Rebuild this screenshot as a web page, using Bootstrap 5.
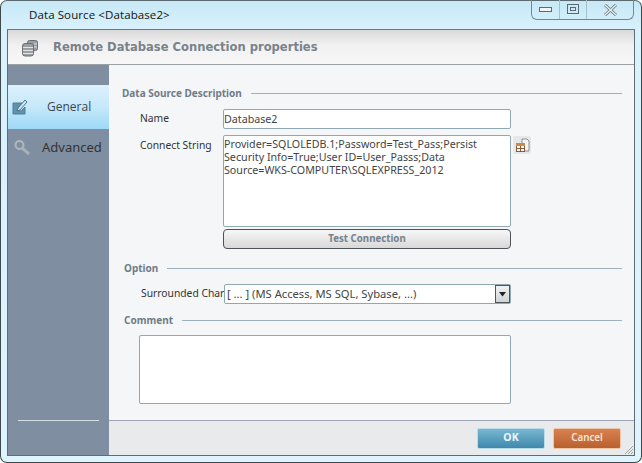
<!DOCTYPE html>
<html lang="en">
<head>
<meta charset="utf-8">
<title>Data Source</title>
<link href="https://cdn.jsdelivr.net/npm/bootstrap@5.3.0/dist/css/bootstrap.min.css" rel="stylesheet">
<style>
html,body{margin:0;height:463px;overflow:hidden;background:#fff}
body{font-family:"Noto Sans",sans-serif;font-size:11px;color:#333}
.dlg{width:642px;height:463px;border:1px solid #3c4a50;border-top-color:#5a6a70;border-radius:7px;background:linear-gradient(180deg,#c7e8f6 0,#d8f1fc 28px,#dff4fd 100%)}
.cap{height:28px;padding-left:28px;font-size:11.5px;color:#111;font-family:"Open Sans",sans-serif;position:relative;letter-spacing:.1px}
.ctl{position:absolute;top:-1px;right:7px;width:103px;height:20px;border:1px solid #6f8a96;border-top:0;border-radius:0 0 6px 6px}
.ctl>div{height:19px;border-right:1px solid #a5bfcb}
.ctl>div:last-child{border-right:0}
.inner{margin:0 6px 6px;border:1px solid #5e6c74;background:#f5f6f7;border-top-color:#6a7880;min-height:0}
.hdr{height:35px;padding-left:14px;padding-top:2px;background:linear-gradient(180deg,#d9d9d9 0,#f1f1f1 45%,#f7f7f7 100%);border-bottom:1px solid #9aa0a4;gap:15px}
.hdr h1{font-family:"DejaVu Sans",sans-serif;font-size:11.55px;font-weight:700;color:#78828a;margin:0}
.side{width:101px;background:#7f8fa1;padding-top:20px;position:relative}
.tab{height:44px;padding-left:4px}
.tab span{color:#e4e8ee;font-family:"Open Sans",sans-serif;font-size:12px}
.tab-on{background:linear-gradient(180deg,#dcf1fc 0,#c6e8fa 50%,#9ed8f6 100%)}
.tab-on span{color:#3a4650;margin-left:19px}
.tab-off{height:37px;padding-left:6px}
.tab-off span{margin-left:12px;font-size:13px}
.rule-s{position:absolute;left:10px;width:81px;top:355px;border-top:1px solid #d6dde4}
.pane{padding:21px 12px 0 13px}
.leg{gap:9px;height:14px;color:#6f7c88;font-weight:700;font-size:10px;font-family:"Noto Sans",sans-serif}
.leg i{flex:1;border-top:1px solid #9db0bd}
.lbl{width:101px;padding-left:18px;color:#333;font-size:10.3px}
.form-control.fld{border:1px solid #8fa8b4;border-radius:2px;font-size:10.7px;padding:0;color:#444;background-color:#fff;line-height:13px;box-shadow:none;min-height:0;font-family:"Noto Sans",sans-serif;resize:none}
.nm{height:20px;width:288px}
.cs{height:92px;width:288px;padding-top:2px!important}
.tst{width:288px;height:20px;margin-top:2px;margin-left:101px;border:1px solid #4d5258;border-radius:4px;padding:0;background:linear-gradient(180deg,#f7f7f7,#d8d8d8);font-size:9.7px;font-weight:700;color:#75818c;font-family:"Noto Sans",sans-serif}
.pick{width:18px;height:18px;background:#e6e7e8;border-radius:2px;margin-left:2px;margin-top:1px}
.sel{width:287px;height:20px;background:#fff;border:1px solid #8fa8b4;border-radius:2px;padding-left:2px;position:relative;color:#444;font-size:11.2px}
.arr{position:absolute;right:0;top:0;width:15px;height:18px;border:1px solid #4f555a;background:linear-gradient(180deg,#f2f2f2,#cfd3d6)}
.cmt{width:372px;height:69px;margin-left:17px;margin-top:8px}
.foot{height:35px;background:#e9eaec;border-top:1px solid #9da3b4;padding-right:13px;gap:8px;position:relative}
.act{width:68px;height:21px;border:0;border-radius:2px;padding:0;font-size:10.5px;font-family:"Noto Sans",sans-serif;color:#eef6fa}
.ok{background:linear-gradient(180deg,#78b7d2,#3f88ad);font-weight:700;border:1px solid #b8dbe8}
.cnl{background:linear-gradient(180deg,#d9824f,#b8602e);border:1px solid #eec6ab;font-weight:600;font-size:9.8px;color:#f6e6da}
.grip{position:absolute;right:0;bottom:0}
</style>
</head>
<body>
<div class="dlg d-flex flex-column">
  <div class="cap d-flex align-items-center">Data Source &lt;Database2&gt;
    <div class="ctl d-flex">
      <div class="d-flex align-items-center justify-content-center" style="width:28px"><svg width="13" height="6"><rect x=".5" y=".5" width="12" height="4" fill="#f2f4f5" stroke="#5b6a72"/></svg></div>
      <div class="d-flex align-items-center justify-content-center" style="width:27px"><svg width="12" height="11"><rect x=".5" y=".5" width="11" height="9" fill="none" stroke="#5b6a72"/><rect x="3.5" y="3.5" width="5" height="3" fill="none" stroke="#5b6a72"/></svg></div>
      <div class="d-flex flex-grow-1 align-items-center justify-content-center"><svg width="13" height="12"><path d="M1 1l11 10M12 1L1 11" stroke="#6a7a82" stroke-width="3"/><path d="M1 1l11 10M12 1L1 11" stroke="#e9eef0" stroke-width="1.4"/></svg></div>
    </div>
  </div>
  <div class="inner flex-grow-1 d-flex flex-column">
    <div class="hdr d-flex align-items-center">
      <svg width="16" height="17" viewBox="0 0 16 17"><g fill="#9b9fa3" stroke="#6a6e72"><rect x="5.500" y=".5" width="10" height="10" rx="2"/><rect x=".5" y="3.500" width="11" height="12.500" rx="2.500"/></g><path d="M1 7.500h10M1 10.500h10M1 13.500h10M12 4h3M12 7h3" stroke="#e2e4e6"/></svg>
      <h1>Remote Database Connection properties</h1>
    </div>
    <div class="flex-grow-1 d-flex">
      <div class="side">
        <div class="tab tab-on d-flex align-items-center">
          <svg width="16" height="16" viewBox="0 0 16 16"><path d="M1 4h9l-4 5v3h3l4-4v7H1z" fill="#5f93ad" stroke="#4d7f99"/><path d="M6 9l7-8 2 2-7 8-3 1z" fill="#cfe6f2" stroke="#44758f"/></svg>
          <span>General</span>
        </div>
        <div class="tab-off d-flex align-items-center">
          <svg width="16" height="16" viewBox="0 0 16 16"><circle cx="5.500" cy="5" r="4" fill="none" stroke="#b0b6bc" stroke-width="2"/><path d="M8 8l7 6" stroke="#a9afb6" stroke-width="3"/></svg>
          <span>Advanced</span>
        </div>
        <div class="rule-s"></div>
      </div>
      <div class="flex-grow-1 d-flex flex-column">
        <div class="pane flex-grow-1">
          <div class="leg d-flex align-items-center"><span>Data Source Description</span><i></i></div>
          <div class="d-flex align-items-center" style="margin-top:9px"><div class="lbl">Name</div><input class="form-control fld nm" value="Database2"></div>
          <div class="d-flex position-relative" style="margin-top:6px"><div class="lbl" style="padding-top:3px">Connect String</div><textarea class="form-control fld cs">Provider=SQLOLEDB.1;Password=Test_Pass;Persist Security Info=True;User ID=User_Passs;Data Source=WKS-COMPUTER\SQLEXPRESS_2012</textarea>
            <div class="pick d-flex align-items-center justify-content-center"><svg width="15" height="15" viewBox="0 0 15 15"><path d="M7 1h5l2 2v10H7z" fill="#f4f4f4" stroke="#8a9096"/><rect x="1.500" y="5.500" width="8" height="8" fill="#fff" stroke="#8a5a3a"/><rect x="1" y="5" width="9" height="3" fill="#c98a4e"/><path d="M1 10.500h9M5.500 8v6" stroke="#8a5a3a"/></svg></div>
          </div>
          <button class="btn tst d-block" type="button">Test Connection</button>
          <div class="leg d-flex align-items-center" style="margin-top:12px;padding-left:2px"><span>Option</span><i></i></div>
          <div class="d-flex align-items-center" style="margin-top:9px"><div class="lbl" style="padding-left:19px;white-space:nowrap;width:102px">Surrounded Char</div><div class="sel d-flex align-items-center">[ ... ] (MS Access, MS SQL, Sybase, ...)<div class="arr d-flex align-items-center justify-content-center"><svg width="9" height="5"><path d="M1 0h7L4.500 4.500z" fill="#222"/></svg></div></div></div>
          <div class="leg d-flex align-items-center" style="margin-top:9px;padding-left:2px"><span>Comment</span><i></i></div>
          <textarea class="form-control fld cmt"></textarea>
        </div>
        <div class="foot d-flex align-items-center justify-content-end">
          <button class="btn act ok" type="button">OK</button>
          <button class="btn act cnl" type="button">Cancel</button>
          <svg class="grip" width="11" height="11"><path d="M10 2L2 10M10 5L5 10M10 8L8 10" stroke="#9aa4ac"/></svg>
        </div>
      </div>
    </div>
  </div>
</div>
<script src="https://cdn.jsdelivr.net/npm/bootstrap@5.3.0/dist/js/bootstrap.bundle.min.js"></script>
</body>
</html>
